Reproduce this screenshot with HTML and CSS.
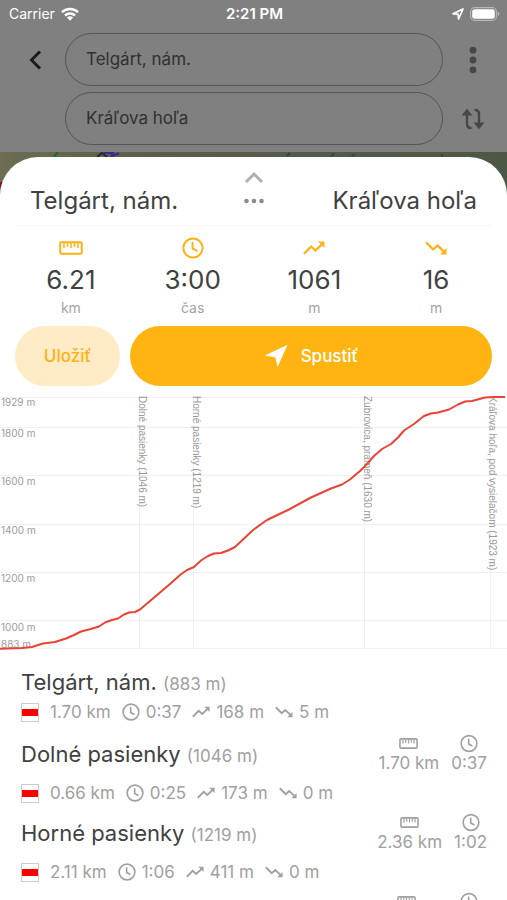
FILE: index.html
```html
<!DOCTYPE html>
<html lang="sk">
<head>
<meta charset="utf-8">
<meta name="viewport" content="width=device-width, initial-scale=1">
<title>Telgárt, nám. – Kráľova hoľa</title>
<link rel="stylesheet" href="styles.css">
</head>
<body>
<svg class="defs" aria-hidden="true">
  <symbol id="ruler" viewBox="0 0 24 14"><g fill="none" stroke="currentColor" stroke-width="2"><rect x="1.200" y="1.200" width="21.600" height="11.600" rx="1.400"/><path d="M5 2v5M8.500 2v4M12 2v5M15.500 2v4M19 2v5" stroke-width="1.500"/></g></symbol>
  <symbol id="clock" viewBox="0 0 22 22"><g fill="none" stroke="currentColor" stroke-width="2" stroke-linecap="round" stroke-linejoin="round"><circle cx="11" cy="11" r="9.600"/><path d="M10.600 5.800v5.700l4 2.200"/></g></symbol>
  <symbol id="up" viewBox="0 0 22 14"><path d="M1 12.800L8.200 5.500l4.300 4L19.500 2.800" fill="none" stroke="currentColor" stroke-width="2.300"/><path d="M15 .5h6.500V7z" fill="currentColor"/></symbol>
  <symbol id="down" viewBox="0 0 22 14"><path d="M1 1.200l7.200 7.300 4.300-4 7 6.700" fill="none" stroke="currentColor" stroke-width="2.300"/><path d="M15 13.500h6.500V7z" fill="currentColor"/></symbol>
</svg>

<div class="screen">
  <header class="top">
    <div class="status">
      <span class="carrier">Carrier
        <svg class="wifi" viewBox="0 0 18 14" aria-hidden="true"><g fill="none" stroke="#fff" stroke-width="2.500"><path d="M1 5.200a11.500 11.500 0 0 1 16 0"/><path d="M4 8.500a7.200 7.200 0 0 1 10 0"/></g><path d="M9 13.800L5.900 10.600a4.500 4.500 0 0 1 6.200 0z" fill="#fff"/></svg>
      </span>
      <time class="time">2:21 PM</time>
      <span class="power">
        <svg class="location" viewBox="0 0 12 12" aria-hidden="true"><path d="M1 5.800L11 1 6.600 11 6 6.200z" fill="none" stroke="#fff" stroke-width="1.700" stroke-linejoin="round"/></svg>
        <svg class="battery" viewBox="0 0 30 14" aria-hidden="true"><rect x=".6" y=".6" width="25.800" height="12.800" rx="4" fill="none" stroke="#b8b8b8" stroke-width="1.100"/><rect x="2.200" y="2.200" width="22.600" height="9.600" rx="2.500" fill="#fff"/><path d="M27.800 4.800c2 .6 2 3.800 0 4.400z" fill="#b8b8b8"/></svg>
      </span>
    </div>
    <form class="search">
      <button class="icon-button" type="button" aria-label="Späť"><svg class="back" viewBox="0 0 14 20"><path d="M12 1.500L3.500 10l8.500 8.500" fill="none" stroke="#1c1c1c" stroke-width="3"/></svg></button>
      <input class="field" type="text" aria-label="Štart" value="Telgárt, nám.">
      <button class="icon-button" type="button" aria-label="Viac"><svg class="more" viewBox="0 0 8 28" fill="#474747"><circle cx="4" cy="4.200" r="3.400"/><circle cx="4" cy="14" r="3.400"/><circle cx="4" cy="23.800" r="3.400"/></svg></button>
      <span></span>
      <input class="field" type="text" aria-label="Cieľ" value="Kráľova hoľa">
      <button class="icon-button" type="button" aria-label="Vymeniť"><svg class="swap" viewBox="0 0 24 22"><path d="M6 6v10.500q0 3 3.500 3.500M14.500 2q3.500.5 3.500 3.500V16" fill="none" stroke="#474747" stroke-width="2.400" stroke-linecap="round"/><path d="M6 .8L11.500 7.500H.5zM18 21.200l5.500-6.700h-11z" fill="#474747"/></svg></button>
    </form>
  </header>

  <main class="map">
    <svg class="terrain" viewBox="0 0 507 48" preserveAspectRatio="none" aria-hidden="true">
      <defs><linearGradient id="land"><stop offset="0" stop-color="#6c6d52"/><stop offset=".3" stop-color="#595e4a"/><stop offset=".6" stop-color="#525b4e"/><stop offset="1" stop-color="#4c5844"/></linearGradient></defs>
      <path d="M0 0h507v48H0z" fill="url(#land)"/>
      <path d="M54 5l4-5" stroke="#08791f" stroke-width="2"/>
      <path d="M97 5l5-4 5 4" stroke="#272735" stroke-width="2" fill="none"/>
      <path d="M104 1h9l-2 4 8-4" stroke="#33308a" stroke-width="2" fill="none"/>
      <path d="M287 4l3-3M331 5l3-4M352 5l2-3M442 5v-3" stroke="#3c433b" stroke-width="2"/>
      <path d="M0 30h3v8H0z" fill="#8b1216"/>
    </svg>
    <section class="sheet">
      <div class="ends">
        <h1 class="place">Telgárt, nám.</h1>
        <button class="handle" type="button" aria-label="Rozbaliť"><svg viewBox="0 0 24 38"><path d="M4 15l8-8 8 8" fill="none" stroke="#b0b0b0" stroke-width="3"/><g fill="#8b8b8b"><circle cx="4.500" cy="34" r="2.300"/><circle cx="12" cy="34" r="2.300"/><circle cx="19.500" cy="34" r="2.300"/></g></svg></button>
        <h1 class="place end">Kráľova hoľa</h1>
      </div>

      <div class="stats">
        <div class="stat"><svg class="wide"><use href="#ruler"/></svg><strong>6.21</strong><span>km</span></div>
        <div class="stat"><svg class="round"><use href="#clock"/></svg><strong>3:00</strong><span>čas</span></div>
        <div class="stat"><svg class="trend"><use href="#up"/></svg><strong>1061</strong><span>m</span></div>
        <div class="stat"><svg class="trend"><use href="#down"/></svg><strong>16</strong><span>m</span></div>
      </div>

      <div class="actions">
        <button class="save" type="button">Uložiť</button>
        <button class="start" type="button"><svg viewBox="0 0 24 24" aria-hidden="true"><path d="M.8 11.500L23.500.8 13.500 23.200 11.500 13.500z" fill="#fff"/></svg>Spustiť</button>
      </div>

      <svg class="chart" viewBox="0 0 507 254" role="img" aria-label="Výškový profil">
        <g class="grid"><path d="M0 1.500h507M0 31.500h507M0 79.500h507M0 128.500h507M0 176.500h507M0 224.500h507M0 252.500h507"/><path d="M139.500 0v253M193.500 0v253M364.500 0v253M490.500 0v253"/></g>
        <g class="levels"><text x="1" y="10">1929 m</text><text x="1" y="41">1800 m</text><text x="1" y="89">1600 m</text><text x="1" y="138">1400 m</text><text x="1" y="186">1200 m</text><text x="1" y="235">1000 m</text><text x="1" y="252">883 m</text></g>
        <g class="points"><text transform="translate(139 0) rotate(90)">Dolné pasienky (1046 m)</text><text transform="translate(193 0) rotate(90)">Horné pasienky (1219 m)</text><text transform="translate(364 0) rotate(90)">Zubrovica, prameň (1630 m)</text><text transform="translate(489 0) rotate(90)">Kráľova hoľa, pod vysielačom (1923 m)</text></g>
        <path class="profile" d="M0 252.700L22 252 32 251 43 247.500 55 246 66 242.500 74 239 81 235.500 91 233 99 230.500 105 226.500 112 224 118 222.500 124 218.500 129 216.500 135 216 140 213.500 150 205 160 196.500 170 188 180 179 187 174 194 171 201 164.500 208 160 214 157.500 221 157 228 154.500 235 151 243 143.500 253 134 267 124 289 113.500 311 101.500 331 92.500 342 88.500 350 83.500 360 75 367 68 374 60 382 53 391 48 398 41.500 404 34.500 414 28 424 20 431 17.500 438 16.500 449 13.500 458 8.500 465 5.500 472 5 485 1.500 495 1 505 1"/>
      </svg>

      <ol class="route">
        <li class="stop">
          <div class="head"><h2>Telgárt, nám. <small>(883 m)</small></h2></div>
          <p class="leg"><i class="mark"></i><span>1.70 km</span><span><svg class="c"><use href="#clock"/></svg>0:37</span><span><svg class="t"><use href="#up"/></svg>168 m</span><span><svg class="t"><use href="#down"/></svg>5 m</span></p>
        </li>
        <li class="stop">
          <div class="head"><h2>Dolné pasienky <small>(1046 m)</small></h2><div class="total"><span><svg class="r"><use href="#ruler"/></svg>1.70 km</span><span><svg class="c"><use href="#clock"/></svg>0:37</span></div></div>
          <p class="leg"><i class="mark"></i><span>0.66 km</span><span><svg class="c"><use href="#clock"/></svg>0:25</span><span><svg class="t"><use href="#up"/></svg>173 m</span><span><svg class="t"><use href="#down"/></svg>0 m</span></p>
        </li>
        <li class="stop">
          <div class="head"><h2>Horné pasienky <small>(1219 m)</small></h2><div class="total"><span><svg class="r"><use href="#ruler"/></svg>2.36 km</span><span><svg class="c"><use href="#clock"/></svg>1:02</span></div></div>
          <p class="leg"><i class="mark"></i><span>2.11 km</span><span><svg class="c"><use href="#clock"/></svg>1:06</span><span><svg class="t"><use href="#up"/></svg>411 m</span><span><svg class="t"><use href="#down"/></svg>0 m</span></p>
        </li>
        <li class="stop">
          <div class="head next"><div class="total"><span class="distance"><svg class="r"><use href="#ruler"/></svg></span><span class="duration"><svg class="c"><use href="#clock"/></svg></span></div></div>
        </li>
      </ol>
    </section>
  </main>
</div>
</body>
</html>
```
FILE: styles.css
```css
* { box-sizing: border-box; }

body {
  margin: 0;
  font-family: Inter, "Liberation Sans", sans-serif;
  color: #414141;
  background: #fff;
}

h1, h2, p, ol { margin: 0; padding: 0; font-weight: 400; }
button, input { font: inherit; }
button { border: 0; padding: 0; background: none; }
svg { display: block; flex: none; }
.defs { position: absolute; width: 0; height: 0; }

.screen { height: 100vh; overflow: hidden; }

/* Dimmed search header */
.top { background: #808080; padding-bottom: 7px; }

.status {
  display: grid;
  grid-template-columns: 1fr auto 1fr;
  align-items: center;
  height: 27px;
  padding: 0 7px 0 9px;
  color: #fff;
  font-size: 14px;
}
.carrier, .power { display: flex; align-items: center; gap: 6px; }
.power { justify-content: flex-end; }
.time { font-size: 15px; font-weight: 600; }
.wifi { width: 18px; height: 14px; }
.location { width: 12px; height: 12px; }
.battery { width: 30px; height: 14px; }

.search {
  display: grid;
  grid-template-columns: 42px 1fr 42px;
  column-gap: 9px;
  row-gap: 6px;
  padding: 6px 13px 0 14px;
}
.field {
  width: 100%;
  min-width: 0;
  height: 53px;
  padding: 0 20px 2px;
  border: 1px solid #555;
  border-radius: 27px;
  background: none;
  color: #303030;
  font-size: 17px;
}
.icon-button { display: grid; place-items: center; }
.back { width: 14px; height: 20px; }
.more { width: 8px; height: 28px; }
.swap { width: 24px; height: 22px; }

/* Map strip with the sheet drawn over it */
.map { display: grid; }
.map > * { grid-area: 1 / 1; }
.terrain { width: 100%; height: 48px; }
.sheet {
  margin-top: 5px;
  min-width: 0;
  background: #fff;
  border-radius: 38px 38px 0 0;
}

.ends {
  display: grid;
  grid-template-columns: 1fr auto 1fr;
  height: 69px;
  margin: 0 15px;
  padding: 0 15px;
  border-bottom: 1px solid #f7f7f7;
}
.place { padding-top: 29px; font-size: 24px; line-height: 30px; white-space: nowrap; }
.end { text-align: right; }
.handle { padding-top: 10px; align-self: start; }
.handle svg { width: 24px; height: 38px; }

.stats { display: grid; grid-template-columns: repeat(4, 1fr); padding: 0 10px; }
.stat { display: flex; flex-direction: column; align-items: center; padding-top: 10px; }
.stat svg { color: #ffb214; height: 24px; }
.stat .wide { width: 24px; }
.stat .round { width: 22px; }
.stat .trend { width: 22px; }
.stat strong { padding-top: 4px; font-size: 26px; font-weight: 400; line-height: 32px; }
.stat span { padding-top: 2px; color: #a3a3a3; font-size: 14px; line-height: 20px; }

.actions { display: grid; grid-template-columns: 105px 1fr; gap: 10px; padding: 8px 15px 10px; }
.actions button {
  display: flex;
  align-items: center;
  justify-content: center;
  gap: 13px;
  height: 60px;
  border-radius: 30px;
  font-size: 17px;
  font-weight: 500;
}
.actions .save { background: #ffebc6; color: #ffb214; }
.actions .start { background: #ffb412; color: #fff; }
.start svg { width: 24px; height: 24px; }

/* Elevation profile */
.chart { width: 100%; height: auto; }
.grid path { fill: none; stroke: #f0f0f0; }
.levels text { fill: #9c9c9c; font-size: 10px; }
.points text { fill: #999; font-family: "Liberation Sans", sans-serif; font-size: 10px; }
.profile { fill: none; stroke: #e94335; stroke-width: 2; stroke-linejoin: round; }

/* Stops along the route */
.route { list-style: none; padding: 12px 20px 0 21px; }
.stop { height: 79px; color: #a0a0a0; font-size: 17px; }
.stop:first-child { height: 72px; }
.head { display: flex; justify-content: space-between; height: 40px; white-space: nowrap; }
.next { justify-content: flex-end; }
h2 { color: #414141; font-size: 22px; line-height: 40px; }
small { color: #a0a0a0; font-size: 17px; }
.total { display: flex; gap: 12px; line-height: 20px; }
.total span { display: flex; flex-direction: column; align-items: center; }
.total svg { height: 19px; }
.distance { min-width: 63px; }
.duration { min-width: 37px; }
.leg { display: flex; align-items: center; gap: 11px; height: 20px; line-height: 20px; }
.leg span { display: flex; align-items: center; gap: 6px; }
.stop + .stop .leg { margin-top: 9px; }
.c { width: 18px; height: 18px; }
.r { width: 19px; height: 12px; }
.t { width: 18px; height: 12px; }
.mark { width: 18px; height: 19px; border: 1px solid #ccc; background: linear-gradient(#fff 5px, #f00 5px, #f00 12px, #fff 12px); }
```
